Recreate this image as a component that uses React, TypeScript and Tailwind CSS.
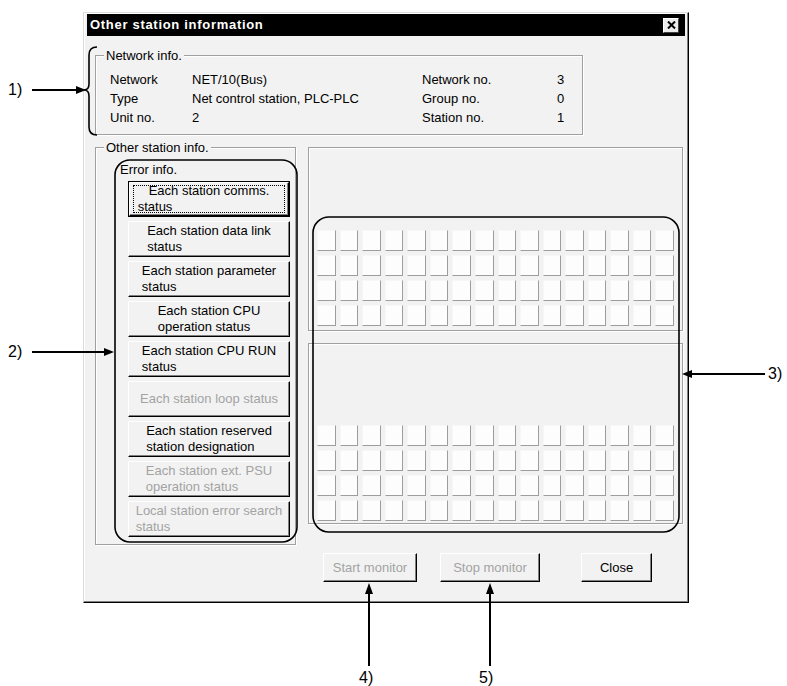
import type { ReactNode } from 'react'

type StationButton = {
  lines: string[]
  disabled?: boolean
  isDefault?: boolean
}

const stationButtons: StationButton[] = [
  { lines: ['Each station comms.', 'status'], isDefault: true },
  { lines: ['Each station data link', 'status'] },
  { lines: ['Each station parameter', 'status'] },
  { lines: ['Each station CPU', 'operation status'] },
  { lines: ['Each station CPU RUN', 'status'] },
  { lines: ['Each station loop status'], disabled: true },
  { lines: ['Each station reserved', 'station designation'] },
  { lines: ['Each station ext. PSU', 'operation status'], disabled: true },
  { lines: ['Local station error search', 'status'], disabled: true },
]

const networkRows = [
  ['Network', 'NET/10(Bus)', 'Network no.', '3'],
  ['Type', 'Net control station, PLC-PLC', 'Group no.', '0'],
  ['Unit no.', '2', 'Station no.', '1'],
]

function GroupBox({ label, className, children }: { label?: string; className?: string; children?: ReactNode }) {
  return (
    <div
      className={`relative border border-[#a0a0a0] shadow-[inset_1px_1px_0_#fff,1px_1px_0_#fff] ${className ?? ''}`}
    >
      {label ? (
        <span className="absolute -top-[8px] left-[8px] bg-[#f2f2f2] px-[2px] text-[13px] leading-[15px] text-black">
          {label}
        </span>
      ) : null}
      {children}
    </div>
  )
}

function RaisedButton({
  children,
  disabled,
  className,
}: {
  children: ReactNode
  disabled?: boolean
  className?: string
}) {
  return (
    <div
      className={`flex items-center justify-center border border-t-white border-l-white border-r-black border-b-black bg-[#f2f2f2] shadow-[inset_-1px_-1px_0_#808080] text-[13px] leading-[16px] ${
        disabled ? 'text-[#a3a3a3]' : 'text-black'
      } ${className ?? ''}`}
    >
      {children}
    </div>
  )
}

function StationCellGrid() {
  return (
    <div className="grid grid-cols-[repeat(16,minmax(0,1fr))] gap-x-[4px] gap-y-[4px]">
      {Array.from({ length: 64 }).map((_, i) => (
        <div
          key={i}
          className="h-[21px] border border-t-[#f7f7f7] border-l-[#f7f7f7] border-r-[#9d9d9d] border-b-[#9d9d9d] bg-[#fdfdfd]"
        />
      ))}
    </div>
  )
}

function Annotations() {
  return (
    <>
      <svg className="pointer-events-none absolute left-0 top-0" width="787" height="686">
        <g fill="none" stroke="black" strokeWidth="1.6">
          <path d="M97 47 Q89 47 89 55 L89 84 Q89 90 84 90 Q89 90 89 96 L89 127 Q89 135 97 135" />
          <rect x="115" y="160" width="182" height="382" rx="15" />
          <rect x="313" y="217" width="366" height="315" rx="16" />
        </g>
        <g stroke="black" strokeWidth="2">
          <line x1="32" y1="90" x2="78" y2="90" />
          <line x1="32" y1="352" x2="106" y2="352" />
          <line x1="690" y1="374" x2="765" y2="374" />
          <line x1="369" y1="592" x2="369" y2="666" />
          <line x1="490" y1="592" x2="490" y2="666" />
        </g>
        <g fill="black">
          <polygon points="86,90 76,86 76,94" />
          <polygon points="114,352 104,348 104,356" />
          <polygon points="682,374 692,370 692,378" />
          <polygon points="369,583 365,594 373,594" />
          <polygon points="490,583 486,594 494,594" />
        </g>
      </svg>
      <span className="absolute left-[8px] top-[81px] text-[16px] leading-[18px] text-black">1)</span>
      <span className="absolute left-[8px] top-[343px] text-[16px] leading-[18px] text-black">2)</span>
      <span className="absolute left-[768px] top-[365px] text-[16px] leading-[18px] text-black">3)</span>
      <span className="absolute left-[359px] top-[669px] text-[16px] leading-[18px] text-black">4)</span>
      <span className="absolute left-[479px] top-[669px] text-[16px] leading-[18px] text-black">5)</span>
    </>
  )
}

export default function App() {
  return (
    <div className="relative h-[686px] w-[787px] overflow-hidden bg-white font-['Liberation_Sans',Arial,sans-serif]">
      <div className="pl-[83px] pt-[12px]">
        <div className="flex h-[591px] w-[606px] flex-col border border-t-[#dcdcdc] border-l-[#dcdcdc] border-r-black border-b-black bg-[#f2f2f2] shadow-[inset_-1px_-1px_0_#808080,inset_1px_1px_0_#fff]">
          {/* title bar */}
          <div className="mx-[3px] mt-[1px] flex h-[22px] items-center justify-between bg-black">
            <span className="pl-[3px] text-[13px] font-bold leading-[16px] tracking-[0.7px] text-white">
              Other station information
            </span>
            <div className="mr-[6px] flex h-[15px] w-[16px] items-center justify-center border border-t-white border-l-white border-r-[#404040] border-b-[#404040] bg-[#ececec]">
              <svg width="9" height="8" viewBox="0 0 9 8">
                <path d="M1 0.5 L8 7.5 M8 0.5 L1 7.5" stroke="black" strokeWidth="2" />
              </svg>
            </div>
          </div>

          {/* network info */}
          <GroupBox label="Network info." className="ml-[11px] mt-[19px] h-[80px] w-[488px]">
            <div className="grid grid-cols-[82px_230px_135px_auto] pl-[14px] pt-[14px] text-[13px] leading-[19px] text-black">
              {networkRows.map((row) =>
                row.map((cell, j) => <span key={`${row[0]}-${j}`}>{cell}</span>),
              )}
            </div>
          </GroupBox>

          {/* station info */}
          <div className="ml-[11px] mt-[12px] flex gap-[12px]">
            <GroupBox label="Other station info." className="h-[398px] w-[201px]">
              <div className="flex flex-col pt-[15px]">
                <span className="pl-[24px] text-[13px] leading-[14px] text-black">Error info.</span>
                <div className="ml-[32px] mt-[4px] flex w-[162px] flex-col gap-[4px]">
                  {stationButtons.map((b, i) => (
                    <div key={i} className={b.isDefault ? 'relative border border-black' : ''}>
                      <RaisedButton disabled={b.disabled} className={b.isDefault ? 'h-[34px]' : 'h-[36px]'}>
                        <span className="inline-block text-left">
                          {b.lines.map((line, k) => (
                            <span
                              key={k}
                              className={`block whitespace-nowrap ${b.isDefault && k === 1 ? 'ml-[-11px]' : ''}`}
                            >
                              {line}
                            </span>
                          ))}
                        </span>
                      </RaisedButton>
                      {b.isDefault ? (
                        <div className="absolute inset-x-[4px] inset-y-[3px] border border-dotted border-black" />
                      ) : null}
                    </div>
                  ))}
                </div>
              </div>
            </GroupBox>

            <div className="flex w-[375px] flex-col gap-[12px]">
              <GroupBox className="flex h-[184px] flex-col justify-end px-[8px] pb-[4px]">
                <StationCellGrid />
              </GroupBox>
              <GroupBox className="flex h-[181px] flex-col justify-end px-[8px] pb-[2px]">
                <StationCellGrid />
              </GroupBox>
            </div>
          </div>

          {/* bottom buttons */}
          <div className="ml-[239px] mt-[8px] flex">
            <RaisedButton disabled className="h-[29px] w-[94px]">
              Start monitor
            </RaisedButton>
            <RaisedButton disabled className="ml-[23px] h-[29px] w-[100px]">
              Stop monitor
            </RaisedButton>
            <RaisedButton className="ml-[41px] h-[29px] w-[71px]">Close</RaisedButton>
          </div>
        </div>
      </div>
      <Annotations />
    </div>
  )
}
